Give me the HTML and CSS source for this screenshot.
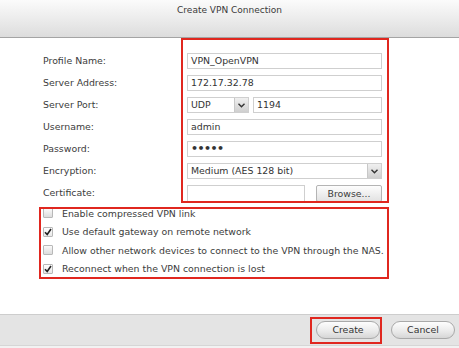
FILE: index.html
```html
<html>
  <head>
    <meta name="viewport" content="width=device-width, initial-scale=1" />
    <link rel="stylesheet" href="styles.css">
  </head>
  <body>
    <div class="dialog">
      <div class="titlebar">Create VPN Connection</div>

      <div class="fields">
        <div class="label">Profile Name:</div>
        <div class="box">VPN_OpenVPN</div>

        <div class="label">Server Address:</div>
        <div class="box">172.17.32.78</div>

        <div class="label">Server Port:</div>
        <div class="pair">
          <div class="box select small">UDP<span class="arrow"><svg width="7" height="5" viewBox="0 0 7 5"><polyline points="0.5,0.8 3.5,3.8 6.5,0.8" fill="none" stroke="#333" stroke-width="1.4"/></svg></span></div>
          <div class="box grow">1194</div>
        </div>

        <div class="label">Username:</div>
        <div class="box">admin</div>

        <div class="label">Password:</div>
        <div class="box dots">&bull;&bull;&bull;&bull;&bull;</div>

        <div class="label">Encryption:</div>
        <div class="box select">Medium (AES 128 bit)<span class="arrow"><svg width="7" height="5" viewBox="0 0 7 5"><polyline points="0.5,0.8 3.5,3.8 6.5,0.8" fill="none" stroke="#333" stroke-width="1.4"/></svg></span></div>

        <div class="label">Certificate:</div>
        <div class="pair">
          <div class="box file"></div>
          <div class="browse">Browse...</div>
        </div>
      </div>

      <div class="options">
        <div class="option"><span class="check"></span>Enable compressed VPN link</div>
        <div class="option"><span class="check on"><svg width="8" height="8" viewBox="0 0 8 8"><polyline points="1,4.2 3.2,6.5 7,1" fill="none" stroke="#222" stroke-width="1.6"/></svg></span>Use default gateway on remote network</div>
        <div class="option"><span class="check"></span>Allow other network devices to connect to the VPN through the NAS.</div>
        <div class="option"><span class="check on"><svg width="8" height="8" viewBox="0 0 8 8"><polyline points="1,4.2 3.2,6.5 7,1" fill="none" stroke="#222" stroke-width="1.6"/></svg></span>Reconnect when the VPN connection is lost</div>
      </div>

      <div class="footer">
        <div class="button">Create</div>
        <div class="button">Cancel</div>
      </div>

      <!-- red annotation frames drawn over the dialog -->
      <span class="mark mark-fields"></span>
      <span class="mark mark-options"></span>
      <span class="mark mark-create"></span>
    </div>
  </body>
</html>
```

FILE: styles.css
```css
body {
  margin: 0;
  background: #fff;
}
.dialog {
  position: relative;
  width: 459px;
  height: 348px;
  overflow: hidden;
  display: flex;
  flex-direction: column;
  background: #f2f2f2;
  font-family: "DejaVu Sans", Verdana, sans-serif;
  font-size: 9.4px;
  color: #3c3c3c;
}
.titlebar {
  height: 32px;
  padding-top: 5px;
  text-align: center;
  font-size: 9px;
  color: #3a3a3a;
  background: linear-gradient(#fbfbfb, #e6e6e6 70%, #dcdcdc);
  border-bottom: 1px solid #a4a4a4;
}

.fields {
  display: grid;
  grid-template-columns: 144px 195px;
  grid-auto-rows: 16px;
  row-gap: 6px;
  padding: 15px 0 0 43px;
  background: #fff;
}
.label {
  line-height: 16px;
}
.box {
  box-sizing: border-box;
  height: 16px;
  line-height: 14px;
  padding-left: 3px;
  border: 1px solid #cfcfcf;
  background: #fff;
  color: #333;
  white-space: nowrap;
  position: relative;
}
.dots {
  font-size: 11px;
  font-weight: bold;
  letter-spacing: -0.5px;
}
.pair {
  display: flex;
  gap: 4px;
}
.small {
  width: 62px;
}
.grow {
  flex: 1;
}
.select .arrow {
  position: absolute;
  right: 0;
  top: 0;
  bottom: 0;
  width: 13px;
  display: flex;
  align-items: center;
  justify-content: center;
  border-left: 1px solid #c8c8c8;
  background: linear-gradient(#f0f0f0, #cfcfcf);
}
.file {
  width: 118px;
  height: 17px;
}
.browse {
  margin-left: auto;
  box-sizing: border-box;
  width: 66px;
  height: 17px;
  line-height: 15px;
  text-align: center;
  border: 1px solid #b4b4b4;
  border-radius: 2px;
  background: linear-gradient(#fdfdfd, #e2e2e2);
}

.options {
  display: flex;
  flex-direction: column;
  padding: 3px 0 0 43px;
  background: #fff;
  flex: 1;
}
.option {
  display: flex;
  align-items: center;
  height: 18.5px;
  white-space: nowrap;
}
.check {
  box-sizing: border-box;
  width: 10px;
  height: 10px;
  margin-right: 9px;
  border: 1px solid #b8b8b8;
  border-radius: 1px;
  background: linear-gradient(#fafafa, #dcdcdc);
  display: flex;
  align-items: center;
  justify-content: center;
}
.check.on {
  background: linear-gradient(#fff, #e8e8e8);
}

.footer {
  margin-bottom: 2px;
  display: flex;
  justify-content: flex-end;
  gap: 11px;
  padding: 6px 4px 0 0;
  box-sizing: border-box;
  height: 32px;
  background: #e4e4e4;
  border-top: 1px solid #cdcdcd;
  border-bottom: 1px solid #d6d6d6;
}
.button {
  box-sizing: border-box;
  width: 64px;
  height: 18px;
  line-height: 16px;
  text-align: center;
  border: 1px solid #a9a9a9;
  border-radius: 9px;
  background: linear-gradient(#fdfdfd, #e9e9e9 60%, #d6d6d6);
  color: #333;
}

.mark {
  position: absolute;
  box-sizing: border-box;
  border: 2px solid #e0271f;
}
.mark-fields {
  left: 181px;
  top: 38px;
  width: 208px;
  height: 165px;
}
.mark-options {
  left: 39px;
  top: 207px;
  width: 350px;
  height: 72px;
}
.mark-create {
  left: 310px;
  top: 317px;
  width: 72px;
  height: 27px;
}
```
